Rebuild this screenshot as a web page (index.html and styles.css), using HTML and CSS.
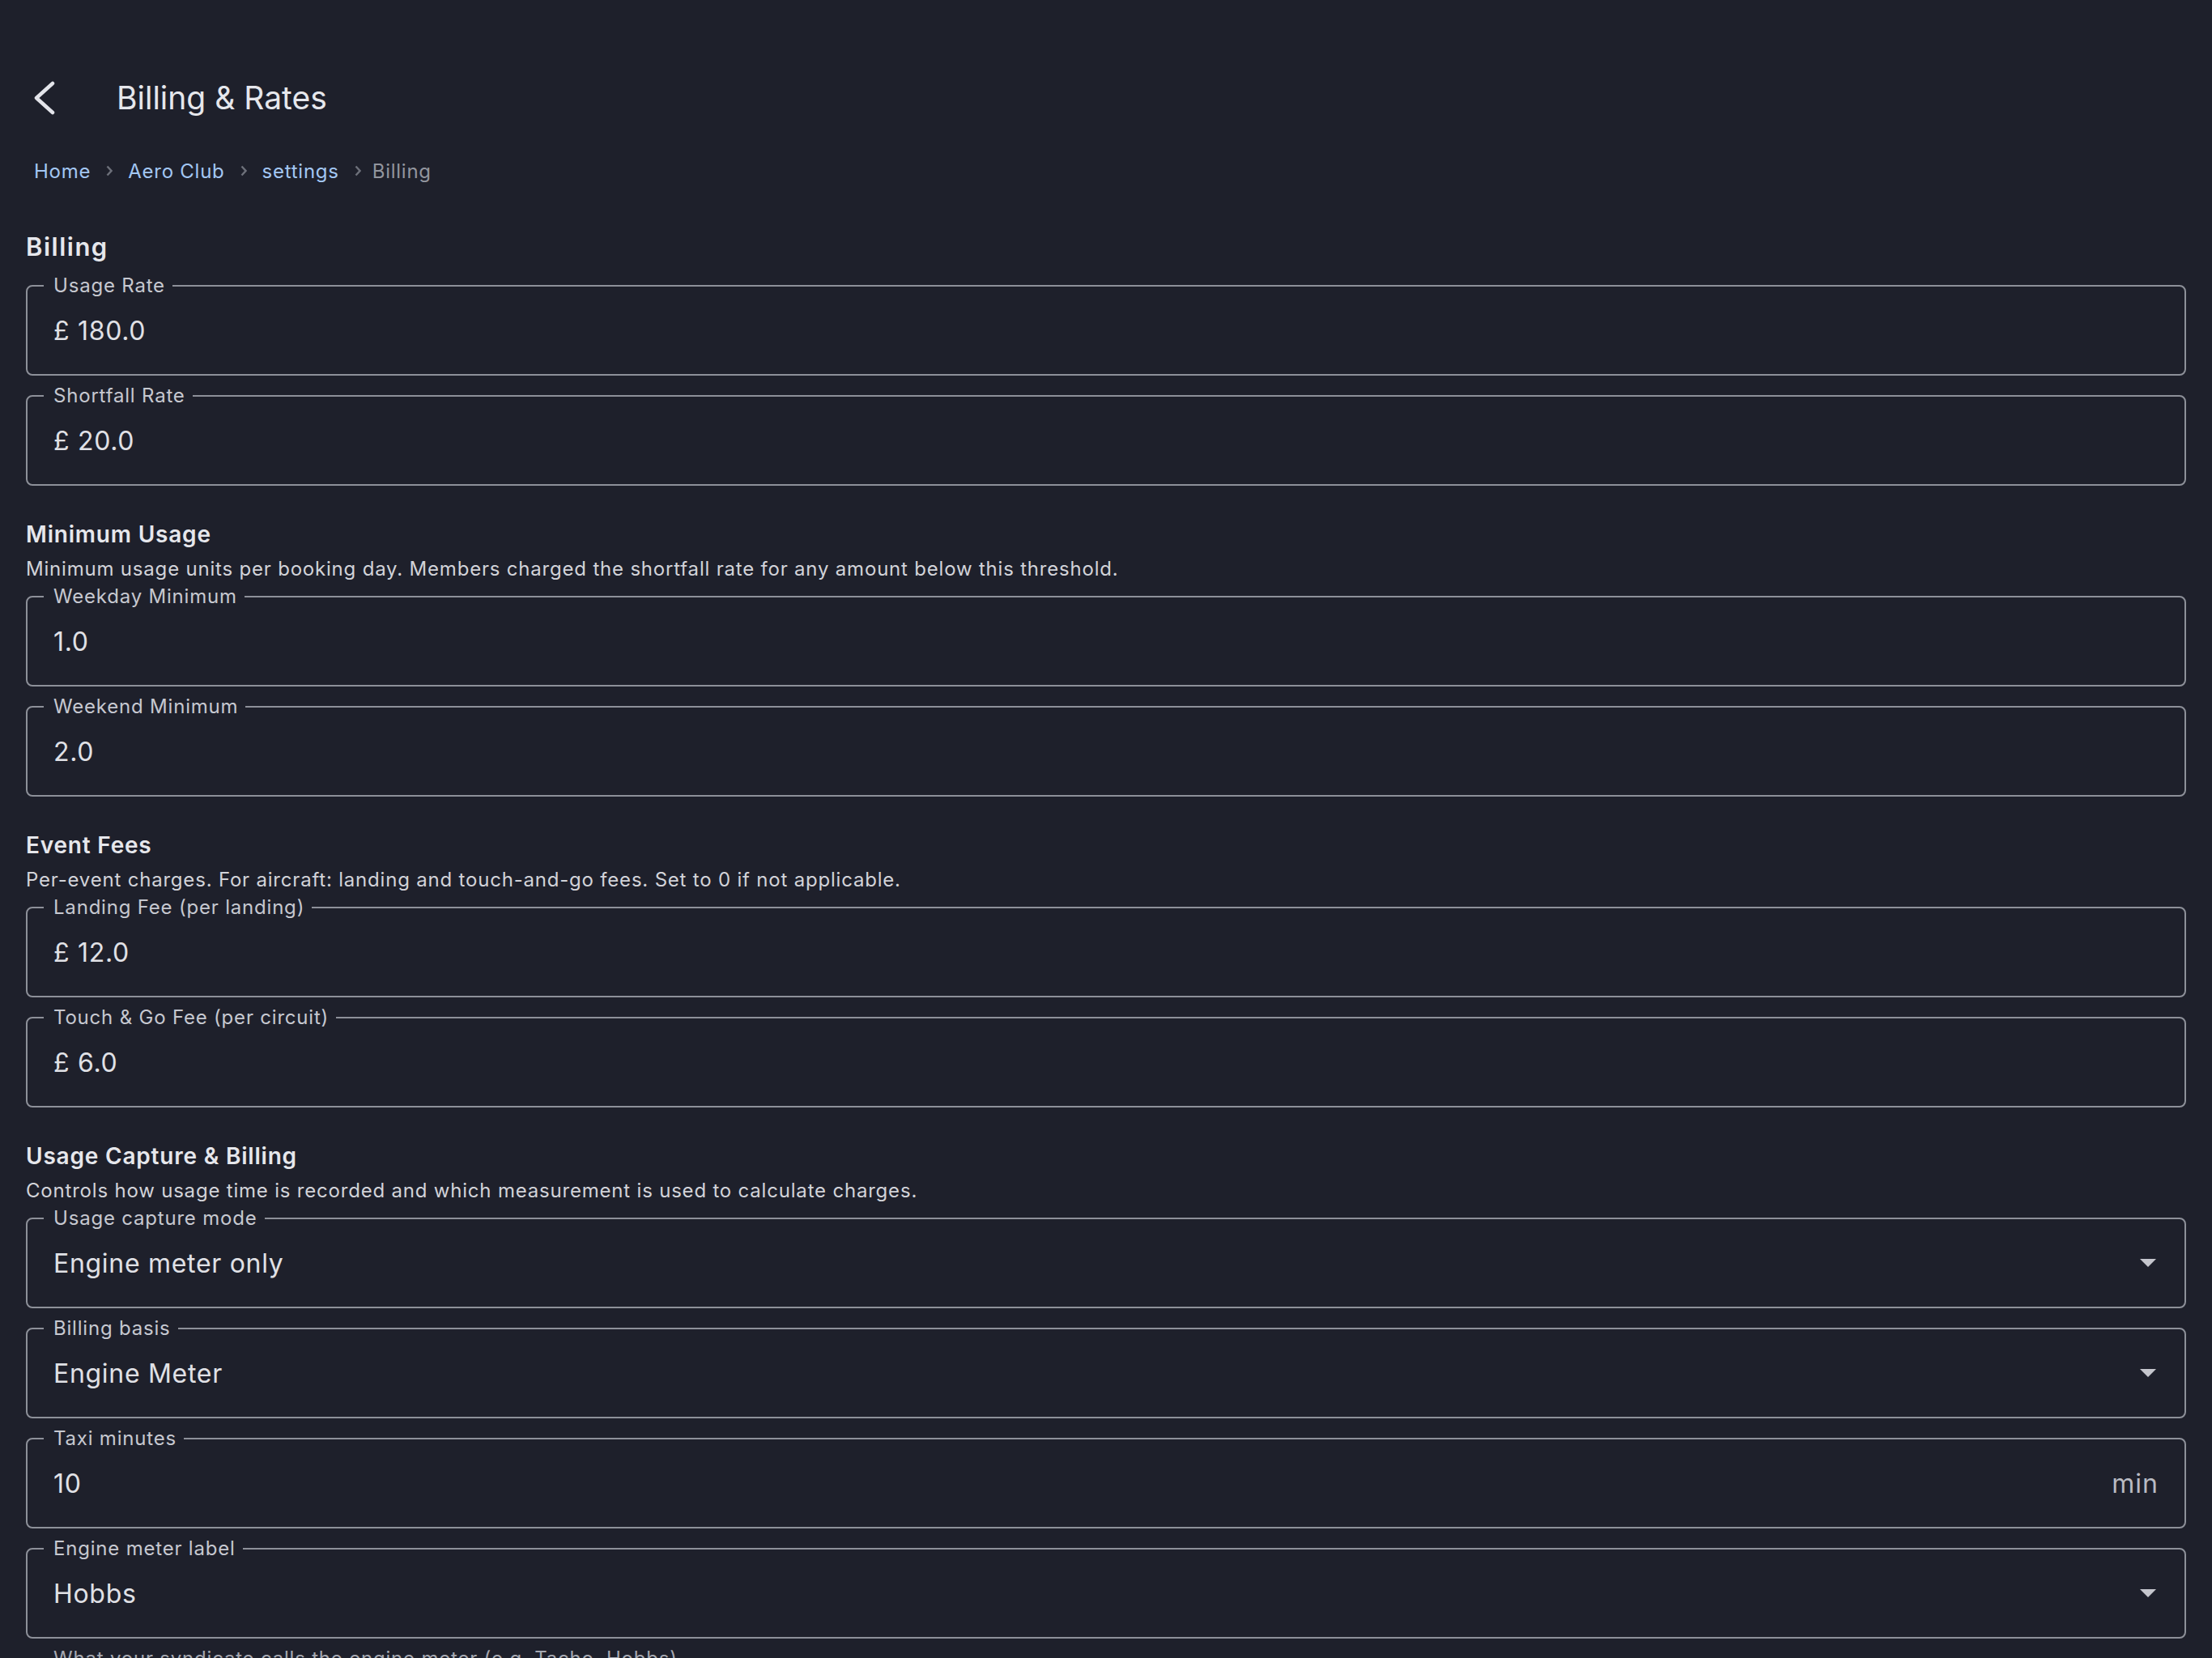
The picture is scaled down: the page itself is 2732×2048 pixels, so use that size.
FILE: index.html
```html
<!DOCTYPE html>
<html lang="en">
<head>
    <meta charset="UTF-8">
    <meta name="viewport" content="width=device-width, initial-scale=1.0">
    <title>Billing &amp; Rates</title>
    <link rel="stylesheet" href="styles.css">
</head>
<body>
    <header class="appbar">
        <button class="back" aria-label="Back">
            <svg width="28" height="44" viewBox="0 0 28 44"><polyline points="23,5 3,23 23,41" /></svg>
        </button>
        <h1 class="title">Billing &amp; Rates</h1>
    </header>

    <main class="page">
        <nav class="crumbs">
            <a href="#">Home</a>
            <span class="sep"><svg width="8" height="14" viewBox="0 0 8 14"><polyline points="1.5,1.5 6.5,7 1.5,12.5" /></svg></span>
            <a href="#">Aero Club</a>
            <span class="sep"><svg width="8" height="14" viewBox="0 0 8 14"><polyline points="1.5,1.5 6.5,7 1.5,12.5" /></svg></span>
            <a href="#">settings</a>
            <span class="sep"><svg width="8" height="14" viewBox="0 0 8 14"><polyline points="1.5,1.5 6.5,7 1.5,12.5" /></svg></span>
            <span class="current">Billing</span>
        </nav>

        <!-- Rates -->
        <h2 class="page-heading">Billing</h2>
        <div class="field">
            <span class="label">Usage Rate</span>
            <span class="value">£ 180.0</span>
        </div>
        <div class="field">
            <span class="label">Shortfall Rate</span>
            <span class="value">£ 20.0</span>
        </div>

        <!-- Minimum usage -->
        <h3 class="section-heading">Minimum Usage</h3>
        <p class="section-desc">Minimum usage units per booking day. Members charged the shortfall rate for any amount below this threshold.</p>
        <div class="field">
            <span class="label">Weekday Minimum</span>
            <span class="value">1.0</span>
        </div>
        <div class="field">
            <span class="label">Weekend Minimum</span>
            <span class="value">2.0</span>
        </div>

        <!-- Event fees -->
        <h3 class="section-heading">Event Fees</h3>
        <p class="section-desc">Per-event charges. For aircraft: landing and touch-and-go fees. Set to 0 if not applicable.</p>
        <div class="field">
            <span class="label">Landing Fee (per landing)</span>
            <span class="value">£ 12.0</span>
        </div>
        <div class="field">
            <span class="label">Touch &amp; Go Fee (per circuit)</span>
            <span class="value">£ 6.0</span>
        </div>

        <!-- Usage capture -->
        <h3 class="section-heading">Usage Capture &amp; Billing</h3>
        <p class="section-desc">Controls how usage time is recorded and which measurement is used to calculate charges.</p>
        <div class="field select">
            <span class="label">Usage capture mode</span>
            <span class="value">Engine meter only</span>
            <svg class="arrow" width="20" height="10" viewBox="0 0 20 10"><polygon points="0,0 20,0 10,10" /></svg>
        </div>
        <div class="field select">
            <span class="label">Billing basis</span>
            <span class="value">Engine Meter</span>
            <svg class="arrow" width="20" height="10" viewBox="0 0 20 10"><polygon points="0,0 20,0 10,10" /></svg>
        </div>
        <div class="field">
            <span class="label">Taxi minutes</span>
            <span class="value">10</span>
            <span class="suffix">min</span>
        </div>
        <div class="field select">
            <span class="label">Engine meter label</span>
            <span class="value">Hobbs</span>
            <svg class="arrow" width="20" height="10" viewBox="0 0 20 10"><polygon points="0,0 20,0 10,10" /></svg>
        </div>
        <p class="helper">What your syndicate calls the engine meter (e.g. Tacho, Hobbs)</p>
    </main>
</body>
</html>
```

FILE: styles.css
```css
body {
    margin: 0;
    padding: 64px 0 0;
    background-color: #1e202b;
    color: #e2e3e8;
    font-family: Inter, "Noto Sans", sans-serif;
}

/* top bar */
.appbar {
    display: flex;
    align-items: center;
    height: 112px;
}
.back {
    width: 112px;
    height: 112px;
    display: flex;
    align-items: center;
    justify-content: center;
    padding: 0;
    border: none;
    background: none;
    cursor: pointer;
}
.back polyline {
    fill: none;
    stroke: #e3e4ea;
    stroke-width: 4.5;
    stroke-linecap: round;
    stroke-linejoin: round;
}
.title {
    margin: 0 0 0 32px;
    font-size: 39px;
    font-weight: 400;
    color: #e6e7ec;
}

.page {
    padding: 0 32px;
}

/* breadcrumbs */
.crumbs {
    display: flex;
    align-items: center;
    margin: 19px 0 0 2px;
    height: 32px;
    font-size: 24px;
    letter-spacing: 0.75px;
}
.crumbs a {
    padding: 0 8px;
    color: #a3c7f3;
    text-decoration: none;
}
.crumbs .sep {
    display: flex;
    margin: 0 11px;
}
.crumbs .sep polyline {
    fill: none;
    stroke: #6d707a;
    stroke-width: 2.4;
}
.crumbs .current {
    margin-left: 3px;
    color: #92959e;
}

/* headings */
.page-heading {
    margin: 58px 0 0;
    font-size: 31px;
    line-height: 40px;
    font-weight: 600;
    letter-spacing: 1.5px;
    color: #e6e7ec;
}
.section-heading {
    margin: 40px 0 0;
    font-size: 28px;
    line-height: 40px;
    font-weight: 600;
    letter-spacing: 0.8px;
    color: #e6e7ec;
}
.section-desc {
    margin: 7px 0 0;
    font-size: 24px;
    line-height: 32px;
    letter-spacing: 0.8px;
    color: #d2d3d9;
}

/* outlined inputs */
.field {
    position: relative;
    display: flex;
    align-items: center;
    box-sizing: border-box;
    height: 112px;
    padding: 0 32px;
    margin-top: 24px;
    border: 2px solid #8d9099;
    border-radius: 8px;
}
.page-heading + .field {
    margin-top: 27px;
}
.section-desc + .field {
    margin-top: 17px;
}
.field .label {
    position: absolute;
    top: -17px;
    left: 20px;
    padding: 0 9px 0 12px;
    background-color: #1e202b;
    font-size: 24px;
    line-height: 32px;
    letter-spacing: 0.8px;
    color: #c6c8d0;
}
.field .value {
    font-size: 32px;
    letter-spacing: 0.7px;
    color: #e0e1e6;
}
.field .suffix {
    margin-left: auto;
    font-size: 32px;
    letter-spacing: 1px;
    color: #b9bbc3;
}
.field .arrow {
    margin: 0 3px 0 auto;
    fill: #c5c6cd;
}

.helper {
    margin: 9px 0 0 34px;
    font-size: 24px;
    line-height: 32px;
    letter-spacing: 0.8px;
    color: #a6a8b1;
}
```
